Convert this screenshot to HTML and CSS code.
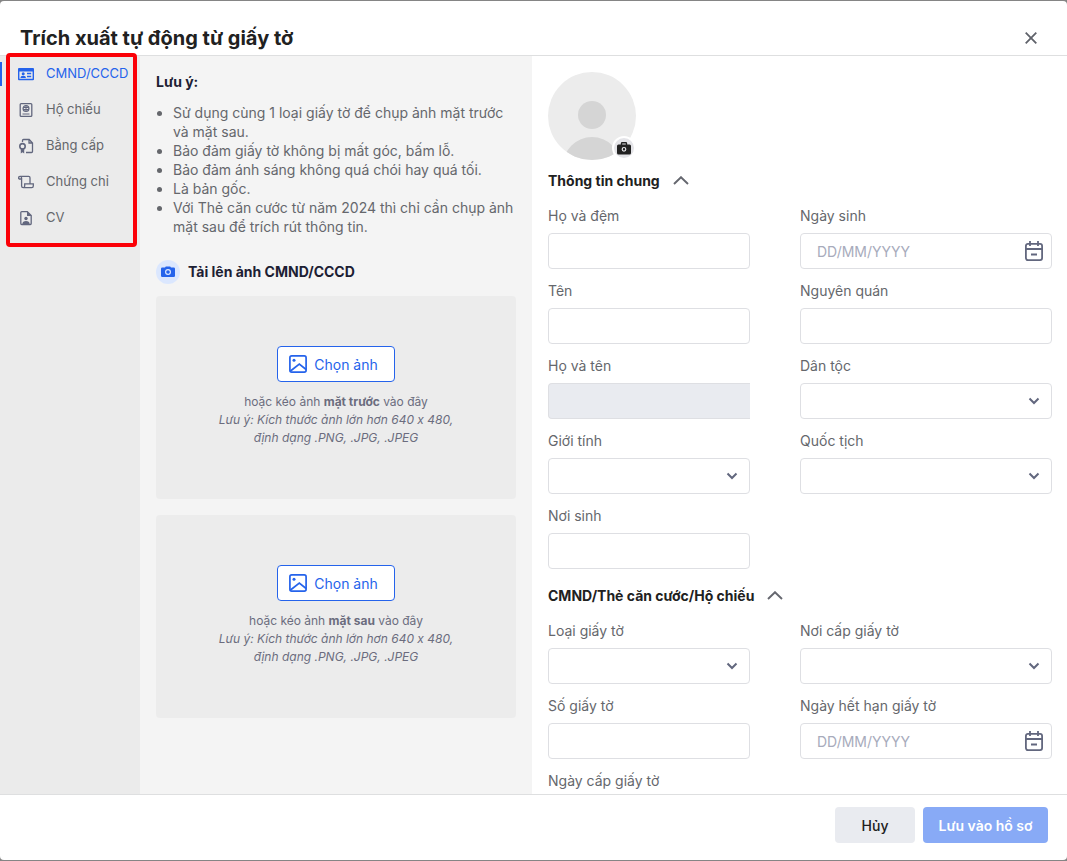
FILE: index.html
```html
<!DOCTYPE html>
<html lang="vi">
<head>
<meta charset="utf-8">
<meta name="viewport" content="width=device-width, initial-scale=1">
<title>Trích xuất tự động từ giấy tờ</title>
<link rel="stylesheet" href="styles.css">
</head>
<body>
<svg class="defs" aria-hidden="true">
  <symbol id="chevron-down" viewBox="0 0 12 8"><path d="M1.500 1.500 6 6l4.500-4.500" fill="none" stroke="currentColor" stroke-width="2"/></symbol>
  <symbol id="chevron-up" viewBox="0 0 16 10"><path d="M1 8 8 1.200 15 8" fill="none" stroke="currentColor" stroke-width="1.900"/></symbol>
  <symbol id="calendar" viewBox="0 0 20 22"><g fill="none" stroke="currentColor" stroke-width="1.800"><rect x="1.900" y="3.900" width="16.200" height="16.200" rx="2"/><path d="M2 9h16M6 1v5M14 1v5M7 14.500h6"/></g></symbol>
  <symbol id="image" viewBox="0 0 18 18"><g fill="none" stroke="currentColor" stroke-width="1.700"><rect x=".9" y=".9" width="16.200" height="16.200" rx="1.800"/><path d="m1.500 16 8.800-6.800 6.800 5.300"/></g><circle cx="5" cy="5.300" r="1.500" fill="currentColor"/></symbol>
</svg>
<main class="modal" role="dialog" aria-labelledby="modal-title">
  <header class="modal-header">
    <h1 class="modal-title" id="modal-title">Trích xuất tự động từ giấy tờ</h1>
    <button class="close" type="button" aria-label="Đóng"><svg width="12" height="12" viewBox="0 0 12 12"><path d="m.7.7 10.600 10.600M11.300.7.700 11.300" fill="none" stroke="currentColor" stroke-width="1.800"/></svg></button>
  </header>
  <div class="modal-body">
    <nav class="sidebar" aria-label="Loại giấy tờ">
      <button class="tab tab-active" type="button">
        <svg class="tab-icon" viewBox="0 0 16 16"><path fill="currentColor" fill-rule="evenodd" d="M1 2h14q1 0 1 1v10.200q0 1-1 1H1q-1 0-1-1V3q0-1 1-1zm.4 3.400v7.300h13.200V5.400z"/><circle cx="5.200" cy="7.700" r="1.500" fill="currentColor"/><path d="M2.500 12q0-2.300 2.700-2.300T7.900 12zM9 6.700h4.200v1.500H9zM9 9.700h4.200v1.500H9z" fill="currentColor"/></svg>
        <span>CMND/CCCD</span>
      </button>
      <button class="tab" type="button">
        <svg class="tab-icon" viewBox="0 0 16 16"><g fill="none" stroke="currentColor" stroke-width="1.300"><rect x="2.200" y="1.600" width="11.600" height="12.800" rx="1"/><circle cx="8" cy="6.500" r="2.900"/><path d="M5 5.500h6M5 7.500h6M8 3.500v6M4.500 12h7" stroke-width="1"/></g></svg>
        <span>Hộ chiếu</span>
      </button>
      <button class="tab" type="button">
        <svg class="tab-icon" viewBox="0 0 16 16"><g fill="none" stroke="currentColor" stroke-width="1.300"><path d="M4.500 4V2.500q0-1 1-1h5.700L14.500 5v8.500q0 1-1 1H8M11 1.700V5h3.300"/><circle cx="4.500" cy="8.300" r="2.700" stroke-width="1.600"/></g><path d="M2.800 10.500h3.400v5l-1.700-1.200-1.700 1.200z" fill="currentColor"/></svg>
        <span>Bằng cấp</span>
      </button>
      <button class="tab" type="button">
        <svg class="tab-icon" viewBox="0 0 16 16"><path d="M.7 5V3.600q0-1.200 1.200-1.200h8.800q1.300 0 1.300 1.300v5.500M.7 5h2.800M2.300 2.400q1.300.2 1.300 1.500v8q0 1.800 1.700 1.800h8.400q1.600 0 1.600-1.600V9.900H6.700v2q0 1.800-1.400 1.800" fill="none" stroke="currentColor" stroke-width="1.300"/></svg>
        <span>Chứng chỉ</span>
      </button>
      <button class="tab" type="button">
        <svg class="tab-icon" viewBox="0 0 16 16"><path d="M3.800 1.700h5.500l3.900 3.900v8q0 .9-.9.900H3.700q-.9 0-.9-.9v-11q0-.9 1-.9z" fill="none" stroke="currentColor" stroke-width="1.300"/><path d="M9 1.500 13.500 6H9z" fill="currentColor"/><circle cx="8" cy="8.500" r="1.700" fill="currentColor"/><path d="M4.500 14v-.5q0-2.500 3.500-2.500t3.500 2.500v.5z" fill="currentColor"/></svg>
        <span>CV</span>
      </button>
      <div class="highlight"></div>
    </nav>
    <section class="upload">
      <h2 class="subtitle">Lưu ý:</h2>
      <ul class="notes">
        <li>Sử dụng cùng 1 loại giấy tờ để chụp ảnh mặt trước và mặt sau.</li>
        <li>Bảo đảm giấy tờ không bị mất góc, bấm lỗ.</li>
        <li>Bảo đảm ánh sáng không quá chói hay quá tối.</li>
        <li>Là bản gốc.</li>
        <li>Với Thẻ căn cước từ năm 2024 thì chỉ cần chụp ảnh mặt sau để trích rút thông tin.</li>
      </ul>
      <div class="upload-head">
        <span class="round-icon"><svg width="14" height="12" viewBox="0 0 14 12"><path d="M1.300 1.500H4L4.800.4h4.400l.8 1.100h2.700q1.300 0 1.300 1.300v7q0 1.200-1.300 1.200H1.300Q0 11 0 9.800v-7q0-1.300 1.300-1.300z" fill="currentColor"/><circle cx="7" cy="6" r="2.400" fill="none" stroke="#dbe7fe" stroke-width="1.200"/></svg></span>
        <h2 class="subtitle">Tải lên ảnh CMND/CCCD</h2>
      </div>
      <div class="dropzone">
        <button class="pick" type="button"><svg width="18" height="18"><use href="#image"/></svg>Chọn ảnh</button>
        <p class="hint">hoặc kéo ảnh <b>mặt trước</b> vào đây<br><i>Lưu ý: Kích thước ảnh lớn hơn 640 x 480,<br>định dạng .PNG, .JPG, .JPEG</i></p>
      </div>
      <div class="dropzone">
        <button class="pick" type="button"><svg width="18" height="18"><use href="#image"/></svg>Chọn ảnh</button>
        <p class="hint">hoặc kéo ảnh <b>mặt sau</b> vào đây<br><i>Lưu ý: Kích thước ảnh lớn hơn 640 x 480,<br>định dạng .PNG, .JPG, .JPEG</i></p>
      </div>
    </section>
    <form class="form" id="info">
      <div class="avatar">
        <svg class="avatar-picture" viewBox="0 0 88 88"><defs><clipPath id="disc"><circle cx="44" cy="44" r="44"/></clipPath></defs><g clip-path="url(#disc)"><path fill="#ececec" d="M0 0h88v88H0z"/><circle cx="44" cy="43" r="14" fill="#d5d5d5"/><circle cx="44" cy="94" r="29" fill="#d5d5d5"/></g></svg>
        <button class="avatar-edit" type="button" aria-label="Đổi ảnh"><svg width="14" height="13" viewBox="0 0 14 13"><path d="M4.500 3V1.500q0-.7.700-.7h3.600q.7 0 .7.700V3" fill="none" stroke="#212121" stroke-width="1.400"/><rect y="2.500" width="14" height="10" rx="1.500" fill="#212121"/><circle cx="7" cy="7.300" r="1.800" fill="none" stroke="#e4e4e8" stroke-width="1.200"/></svg></button>
      </div>
      <div class="section-head">
        <h2 class="section-title">Thông tin chung</h2>
        <button class="collapse" type="button" aria-label="Thu gọn thông tin chung"><svg width="16" height="10"><use href="#chevron-up"/></svg></button>
      </div>
      <div class="fields">
        <div class="field field-left"><label for="ho-dem">Họ và đệm</label><input class="control" id="ho-dem" type="text"></div>
        <div class="field"><label for="ngay-sinh">Ngày sinh</label><div class="control-wrap"><input class="control" id="ngay-sinh" type="text" placeholder="DD/MM/YYYY"><svg class="calendar" width="20" height="22"><use href="#calendar"/></svg></div></div>
        <div class="field field-left"><label for="ten">Tên</label><input class="control" id="ten" type="text"></div>
        <div class="field"><label for="nguyen-quan">Nguyên quán</label><input class="control" id="nguyen-quan" type="text"></div>
        <div class="field field-left"><label for="ho-ten">Họ và tên</label><input class="control" id="ho-ten" type="text" disabled></div>
        <div class="field"><label for="dan-toc">Dân tộc</label><div class="control-wrap"><select class="control" id="dan-toc"><option></option></select><svg class="arrow" width="12" height="8"><use href="#chevron-down"/></svg></div></div>
        <div class="field field-left"><label for="gioi-tinh">Giới tính</label><div class="control-wrap"><select class="control" id="gioi-tinh"><option></option></select><svg class="arrow" width="12" height="8"><use href="#chevron-down"/></svg></div></div>
        <div class="field"><label for="quoc-tich">Quốc tịch</label><div class="control-wrap"><select class="control" id="quoc-tich"><option></option></select><svg class="arrow" width="12" height="8"><use href="#chevron-down"/></svg></div></div>
        <div class="field field-left"><label for="noi-sinh">Nơi sinh</label><input class="control" id="noi-sinh" type="text"></div>
      </div>
      <div class="section-head section-next">
        <h2 class="section-title">CMND/Thẻ căn cước/Hộ chiếu</h2>
        <button class="collapse" type="button" aria-label="Thu gọn giấy tờ"><svg width="16" height="10"><use href="#chevron-up"/></svg></button>
      </div>
      <div class="fields">
        <div class="field field-left"><label for="loai">Loại giấy tờ</label><div class="control-wrap"><select class="control" id="loai"><option></option></select><svg class="arrow" width="12" height="8"><use href="#chevron-down"/></svg></div></div>
        <div class="field"><label for="noi-cap">Nơi cấp giấy tờ</label><div class="control-wrap"><select class="control" id="noi-cap"><option></option></select><svg class="arrow" width="12" height="8"><use href="#chevron-down"/></svg></div></div>
        <div class="field field-left"><label for="so">Số giấy tờ</label><input class="control" id="so" type="text"></div>
        <div class="field"><label for="het-han">Ngày hết hạn giấy tờ</label><div class="control-wrap"><input class="control" id="het-han" type="text" placeholder="DD/MM/YYYY"><svg class="calendar" width="20" height="22"><use href="#calendar"/></svg></div></div>
        <div class="field field-left"><label for="ngay-cap">Ngày cấp giấy tờ</label><div class="control-wrap"><input class="control" id="ngay-cap" type="text" placeholder="DD/MM/YYYY"><svg class="calendar" width="20" height="22"><use href="#calendar"/></svg></div></div>
      </div>
    </form>
  </div>
  <footer class="modal-footer">
    <button class="btn btn-cancel" type="button">Hủy</button>
    <button class="btn btn-save" type="submit" form="info">Lưu vào hồ sơ</button>
  </footer>
</main>
</body>
</html>
```
FILE: styles.css
```css
* { box-sizing: border-box; }
body {
  margin: 0;
  padding: 1px 0;
  height: 100vh;
  background: #858585;
  color: #65676c;
  font: 14px/19px Inter, "Noto Sans", sans-serif;
  font-variant-ligatures: no-contextual;
}
button, input, select { font: inherit; font-variant-ligatures: inherit; color: inherit; }
button { border: 0; padding: 0; background: none; cursor: pointer; }
h1, h2, p { margin: 0; }
svg { display: block; flex: none; }
.defs { position: absolute; width: 0; height: 0; }

.modal {
  display: flex;
  flex-direction: column;
  height: 100%;
  background: #fff;
  border-radius: 4px;
  overflow: hidden;
}
.modal-header {
  display: flex;
  justify-content: space-between;
  align-items: center;
  padding: 20px 20px 0;
  height: 55px;
  border-bottom: 1px solid #dedfe0;
}
.modal-title { font-size: 20px; line-height: 32px; font-weight: 700; color: #212121; }
.close { display: grid; place-items: center; width: 32px; height: 32px; color: #5f626a; }

.modal-body { display: flex; flex: 1; min-height: 0; }
.sidebar { position: relative; flex: none; width: 140px; background: #ebebeb; }
.tab {
  display: flex;
  align-items: center;
  gap: 12px;
  width: 100%;
  height: 36px;
  padding-left: 18px;
  font-size: 13px;
  line-height: 18px;
  position: relative;
}
.tab span { padding-bottom: 2px; }
.tab-icon { width: 16px; height: 16px; color: #62677e; }
.tab-active, .tab-active .tab-icon { color: #2563eb; }
.tab-active::before {
  content: "";
  position: absolute;
  left: 0;
  top: 6px;
  width: 2px;
  height: 24px;
  background: #2563eb;
}
.highlight {
  position: absolute;
  left: 6px;
  right: 3px;
  top: -3px;
  height: 194px;
  border: 4px solid #fb0007;
  border-radius: 4px;
  pointer-events: none;
}

.upload { flex: none; width: 392px; padding: 16px; background: #f4f4f4; overflow: auto; scrollbar-width: none; }
.subtitle { font-size: 14px; line-height: 20px; font-weight: 700; color: #1c2033; }
.notes { margin: 11px 0 24px; padding-left: 17px; }
.upload-head { display: flex; align-items: center; gap: 8px; margin-bottom: 12px; }
.round-icon { display: grid; place-items: center; width: 24px; height: 24px; border-radius: 50%; background: #dbe7fe; color: #2563eb; }
.dropzone {
  display: flex;
  flex-direction: column;
  align-items: center;
  gap: 11px;
  padding: 50px 16px 52px;
  margin-bottom: 16px;
  border-radius: 4px;
  background: #ececec;
}
.pick {
  display: flex;
  align-items: center;
  gap: 7px;
  height: 36px;
  padding: 0 16px 0 11px;
  border: 1px solid #2563eb;
  border-radius: 4px;
  background: #fff;
  color: #2563eb;
}
.hint { font-size: 12px; line-height: 18px; text-align: center; color: #6b6c7e; }
.hint b { font-weight: 700; }

.form { flex: 1; min-width: 0; padding: 16px 15px 16px 16px; overflow: auto; scrollbar-width: none; }
.avatar { position: relative; width: 88px; height: 88px; margin-bottom: 9px; }
.avatar-picture { width: 88px; height: 88px; }
.avatar-edit {
  position: absolute;
  right: 0;
  bottom: 0;
  display: grid;
  place-items: center;
  width: 24px;
  height: 24px;
  border: 2px solid #fff;
  border-radius: 50%;
  background: #e4e4e8;
}
.section-head { display: flex; align-items: center; gap: 13px; height: 24px; margin-bottom: 13px; }
.section-next { margin-top: 15px; }
.section-title { font-size: 14px; line-height: 20px; font-weight: 700; color: #212121; }
.collapse { color: #65676f; }
.fields { display: grid; grid-template-columns: 1fr 1fr; row-gap: 12px; }
.field { display: grid; gap: 8px; }
.field-left { grid-column: 1; padding-right: 50px; }
.control-wrap { position: relative; }
.control {
  display: block;
  width: 100%;
  height: 36px;
  padding: 0 16px;
  border: 1px solid #dedfe3;
  border-radius: 4px;
  background: #fff;
  appearance: none;
}
.control::placeholder { color: #a7abbc; opacity: 1; }
.control:disabled { background: #e9ebf0; border-color: #dedfe3; border-right: 0; border-radius: 4px 0 0 4px; }
.arrow, .calendar { position: absolute; pointer-events: none; color: #62677e; }
.arrow { right: 12px; top: 14px; }
.calendar { right: 8px; top: 7px; }

.modal-footer { display: flex; justify-content: flex-end; gap: 8px; padding: 12px 19px 17px; border-top: 1px solid #dedfe0; }
.btn { height: 36px; padding: 0 15px; border-radius: 4px; font-weight: 500; }
.btn-cancel { min-width: 80px; background: #e9ebf0; color: #212121; }
.btn-save { min-width: 125px; background: #88aaf6; color: #fff; font-weight: 600; }
```
